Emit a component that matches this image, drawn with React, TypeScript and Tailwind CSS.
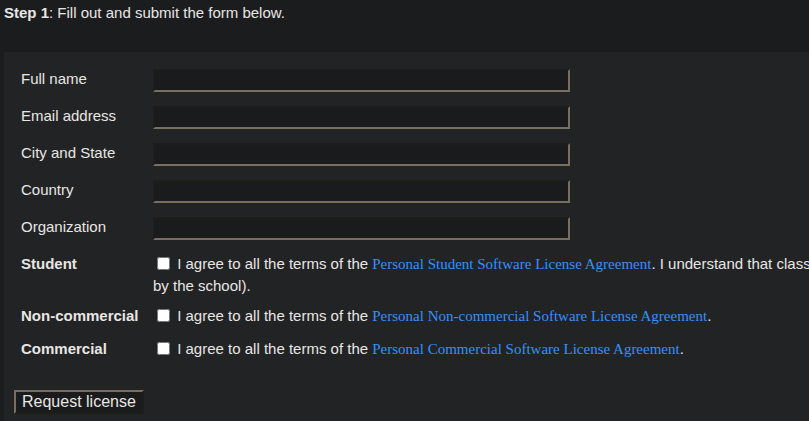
import React from "react";

const sans = { fontFamily: '"Liberation Sans", Arial, sans-serif' };

function TextRow({ label }: { label: string }) {
  return (
    <div className="flex items-center h-[23px]">
      <div className="w-[132px] shrink-0 text-[15px] leading-[17px] pb-[4px]">{label}</div>
      <div className="w-[417px] h-[23px] bg-[#1a1b1c] border-t-2 border-l-2 border-t-[#1f1d1a] border-l-[#1f1d1a] border-b-2 border-r-2 border-b-[#777060] border-r-[#777060]" />
    </div>
  );
}

function Link({ children }: { children: React.ReactNode }) {
  return (
    <a className="text-[#3391ff]" style={{ fontFamily: '"Liberation Serif", "Times New Roman", serif' }}>
      {children}
    </a>
  );
}

function CheckRow({
  label,
  children,
  className,
}: {
  label: string;
  children: React.ReactNode;
  className?: string;
}) {
  return (
    <div className={"flex items-start " + (className ?? "")}>
      <div className="w-[132px] shrink-0 font-bold text-[15px] leading-[21px] whitespace-nowrap">{label}</div>
      <div className="text-[15px] leading-[21px] whitespace-nowrap">
        <input type="checkbox" className="w-[13px] h-[13px] ml-[4px] mr-[3px] align-[-1px]" />{" "}
        {children}
      </div>
    </div>
  );
}

export default function App() {
  return (
    <div className="w-[809px] h-[421px] overflow-hidden bg-[#1b1c1e] text-[#e8e6e3]" style={sans}>
      <div className="pt-[4px] pl-[4px] text-[15px] leading-[17px]">
        <b>Step 1</b>: Fill out and submit the form below.
      </div>
      <div className="ml-[4px] mt-[31px] bg-[#222325] h-[400px] w-[1000px] pl-[17px] pt-[17px]">
        <div className="flex flex-col gap-[14px]">
          <TextRow label="Full name" />
          <TextRow label="Email address" />
          <TextRow label="City and State" />
          <TextRow label="Country" />
          <TextRow label="Organization" />
        </div>
        <CheckRow label="Student" className="mt-[13px]">
          I agree to all the terms of the <Link>Personal Student Software License Agreement</Link>. I understand that class
          licenses are only for registered students (verified
          <br />
          <span>by the school).</span>
        </CheckRow>
        <CheckRow label="Non-commercial" className="mt-[9px]">
          I agree to all the terms of the <Link>Personal Non-commercial Software License Agreement</Link>.
        </CheckRow>
        <CheckRow label="Commercial" className="mt-[11px]">
          I agree to all the terms of the <Link>Personal Commercial Software License Agreement</Link>.
        </CheckRow>
        <button
          className="-ml-[7px] mt-[30px] h-[24px] px-[6px] text-[16px] leading-[18px] bg-[#1a1b1c] text-[#e8e6e3] border-t-2 border-l-2 border-t-[#777060] border-l-[#777060] border-b-2 border-r-2 border-b-[#1f1d1a] border-r-[#1f1d1a]"
          style={sans}
        >
          Request license
        </button>
      </div>
    </div>
  );
}
